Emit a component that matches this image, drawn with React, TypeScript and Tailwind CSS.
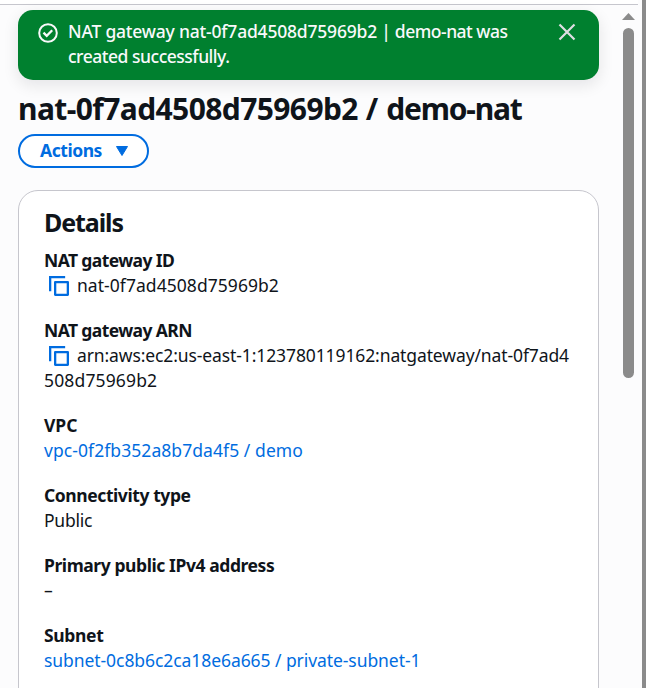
import type { ReactNode } from "react";

function CopyIcon() {
  return (
    <svg className="ml-[5px] mr-2 inline-block align-[-4px]" width="20" height="20" viewBox="0 0 20 20" fill="none" stroke="#006ce0" strokeWidth="2.3">
      <path d="M1.15 15.300V1.150h15" />
      <path d="M6.150 6.150h12.700v12.700H6.150z" strokeLinejoin="round" />
    </svg>
  );
}

function Field({ label, labelClass, children }: { label: string; labelClass: string; children: ReactNode }) {
  return (
    <div>
      <dt className="font-bold">
        <span className={labelClass}>{label}</span>
      </dt>
      <dd>{children}</dd>
    </div>
  );
}

export default function App() {
  return (
    <div className="flex h-[688px] w-[646px] overflow-hidden bg-[#fcfcfd] font-['Noto_Sans','Open_Sans',sans-serif] text-[17.5px] leading-[25px] text-[#0f141a]">
      <div className="flex w-[642px] flex-col">
        <div className="h-[5px] w-[638px] shrink-0 border-b border-[#c6c6cd] bg-white" />
        <div className="flex min-h-0 flex-1">
          <main className="ml-[18px] mt-[5px] w-[581px] shrink-0">
            <div className="flex h-[70px] rounded-[15px] bg-[#00802f] pl-5 pt-[10px] text-[#f9f9fb] shadow-[0_5px_15px_1px_rgba(0,7,22,0.09)]">
              <svg className="mt-[3px] shrink-0" width="20" height="20" viewBox="0 0 20 20" fill="none" stroke="currentColor" strokeWidth="2">
                <circle cx="10" cy="10" r="8.8" />
                <path d="M5.5 9.7l3.2 3.1 5.5-5.6" strokeWidth="2.3" />
              </svg>
              <p className="ml-[10px] -mt-px w-[460px] font-medium">
                <span className="block whitespace-nowrap tracking-[-0.29px]">
                  <span className="tracking-[-0.2px]">NAT gateway nat-0f7ad4508d75969b2 |</span>
                  <span className="tracking-[-0.5px]"> demo-nat was</span>
                </span>
                <span className="tracking-[-0.48px]">created successfully.</span>
              </p>
              <svg className="ml-[30px] mt-[3px] shrink-0" width="18" height="18" viewBox="0 0 18 18" fill="none" stroke="#dedee3" strokeWidth="2.2">
                <path d="M1.5 1.5l15 15M16.500 1.500l-15 15" />
              </svg>
            </div>
            <h1 className="mt-[9px] whitespace-nowrap text-[30px] font-bold leading-[40px] tracking-[-0.6px]">
              nat-0f7ad4508d75969b2<span className="tracking-[0.1px]"> / </span>
              <span className="tracking-[-1.2px]">demo-nat</span>
            </h1>
            <button className="mt-[5px] flex h-[34px] w-[131px] items-center rounded-full border-2 border-[#006ce0] bg-white pl-5 font-bold leading-[24px] text-[#006ce0]">
              <span className="-mt-0.5 w-[62px] tracking-[-0.45px]">Actions</span>
              <svg className="ml-[13px]" width="14" height="12" viewBox="0 0 14 12" fill="currentColor">
                <path d="M1.500 1.500h11L7 10.500z" stroke="currentColor" strokeLinejoin="round" />
              </svg>
            </button>
            <section className="mt-[22px] h-[540px] rounded-[20px] border border-[#c6c6cd] bg-white px-[25px] pt-4">
              <h2 className="text-[25px] font-bold leading-[30px] tracking-[-1.1px]">Details</h2>
              <dl className="mt-[11px] flex flex-col gap-5">
                <Field label="NAT gateway ID" labelClass="tracking-[-0.6px]">
                  <CopyIcon />
                  <span className="tracking-[0.05px]">nat-0f7ad4508d75969b2</span>
                </Field>
                <Field label="NAT gateway ARN" labelClass="tracking-[-0.6px]">
                  <span className="block whitespace-nowrap">
                    <CopyIcon />
                    <span className="tracking-[-0.11px]">arn:aws:ec2:us-east-1:123780119162:natgateway/nat-0f7ad4</span>
                  </span>
                  <span className="tracking-[0.15px]">508d75969b2</span>
                </Field>
                <Field label="VPC" labelClass="">
                  <a className="tracking-[0.07px] text-[#006ce0]">vpc-0f2fb352a8b7da4f5 / demo</a>
                </Field>
                <Field label="Connectivity type" labelClass="tracking-[-0.42px]">
                  <span className="tracking-[-0.25px]">Public</span>
                </Field>
                <Field label="Primary public IPv4 address" labelClass="tracking-[-0.42px]">–</Field>
                <Field label="Subnet" labelClass="tracking-[-0.35px]">
                  <a className="tracking-[-0.07px] text-[#006ce0]">subnet-0c8b6c2ca18e6a665 / private-subnet-1</a>
                </Field>
              </dl>
            </section>
          </main>
          <div className="ml-[22px] flex w-[15px] flex-col items-center pt-[8px]">
            <svg width="13" height="7" viewBox="0 0 13 7" fill="#8b8b8b">
              <path d="M6.500 0L13 7H0z" />
            </svg>
            <div className="mt-2 h-[350px] w-[11px] rounded-full bg-[#8b8b8b]" />
          </div>
        </div>
      </div>
      <div className="w-1 bg-[#8b8b8b]" />
    </div>
  );
}
